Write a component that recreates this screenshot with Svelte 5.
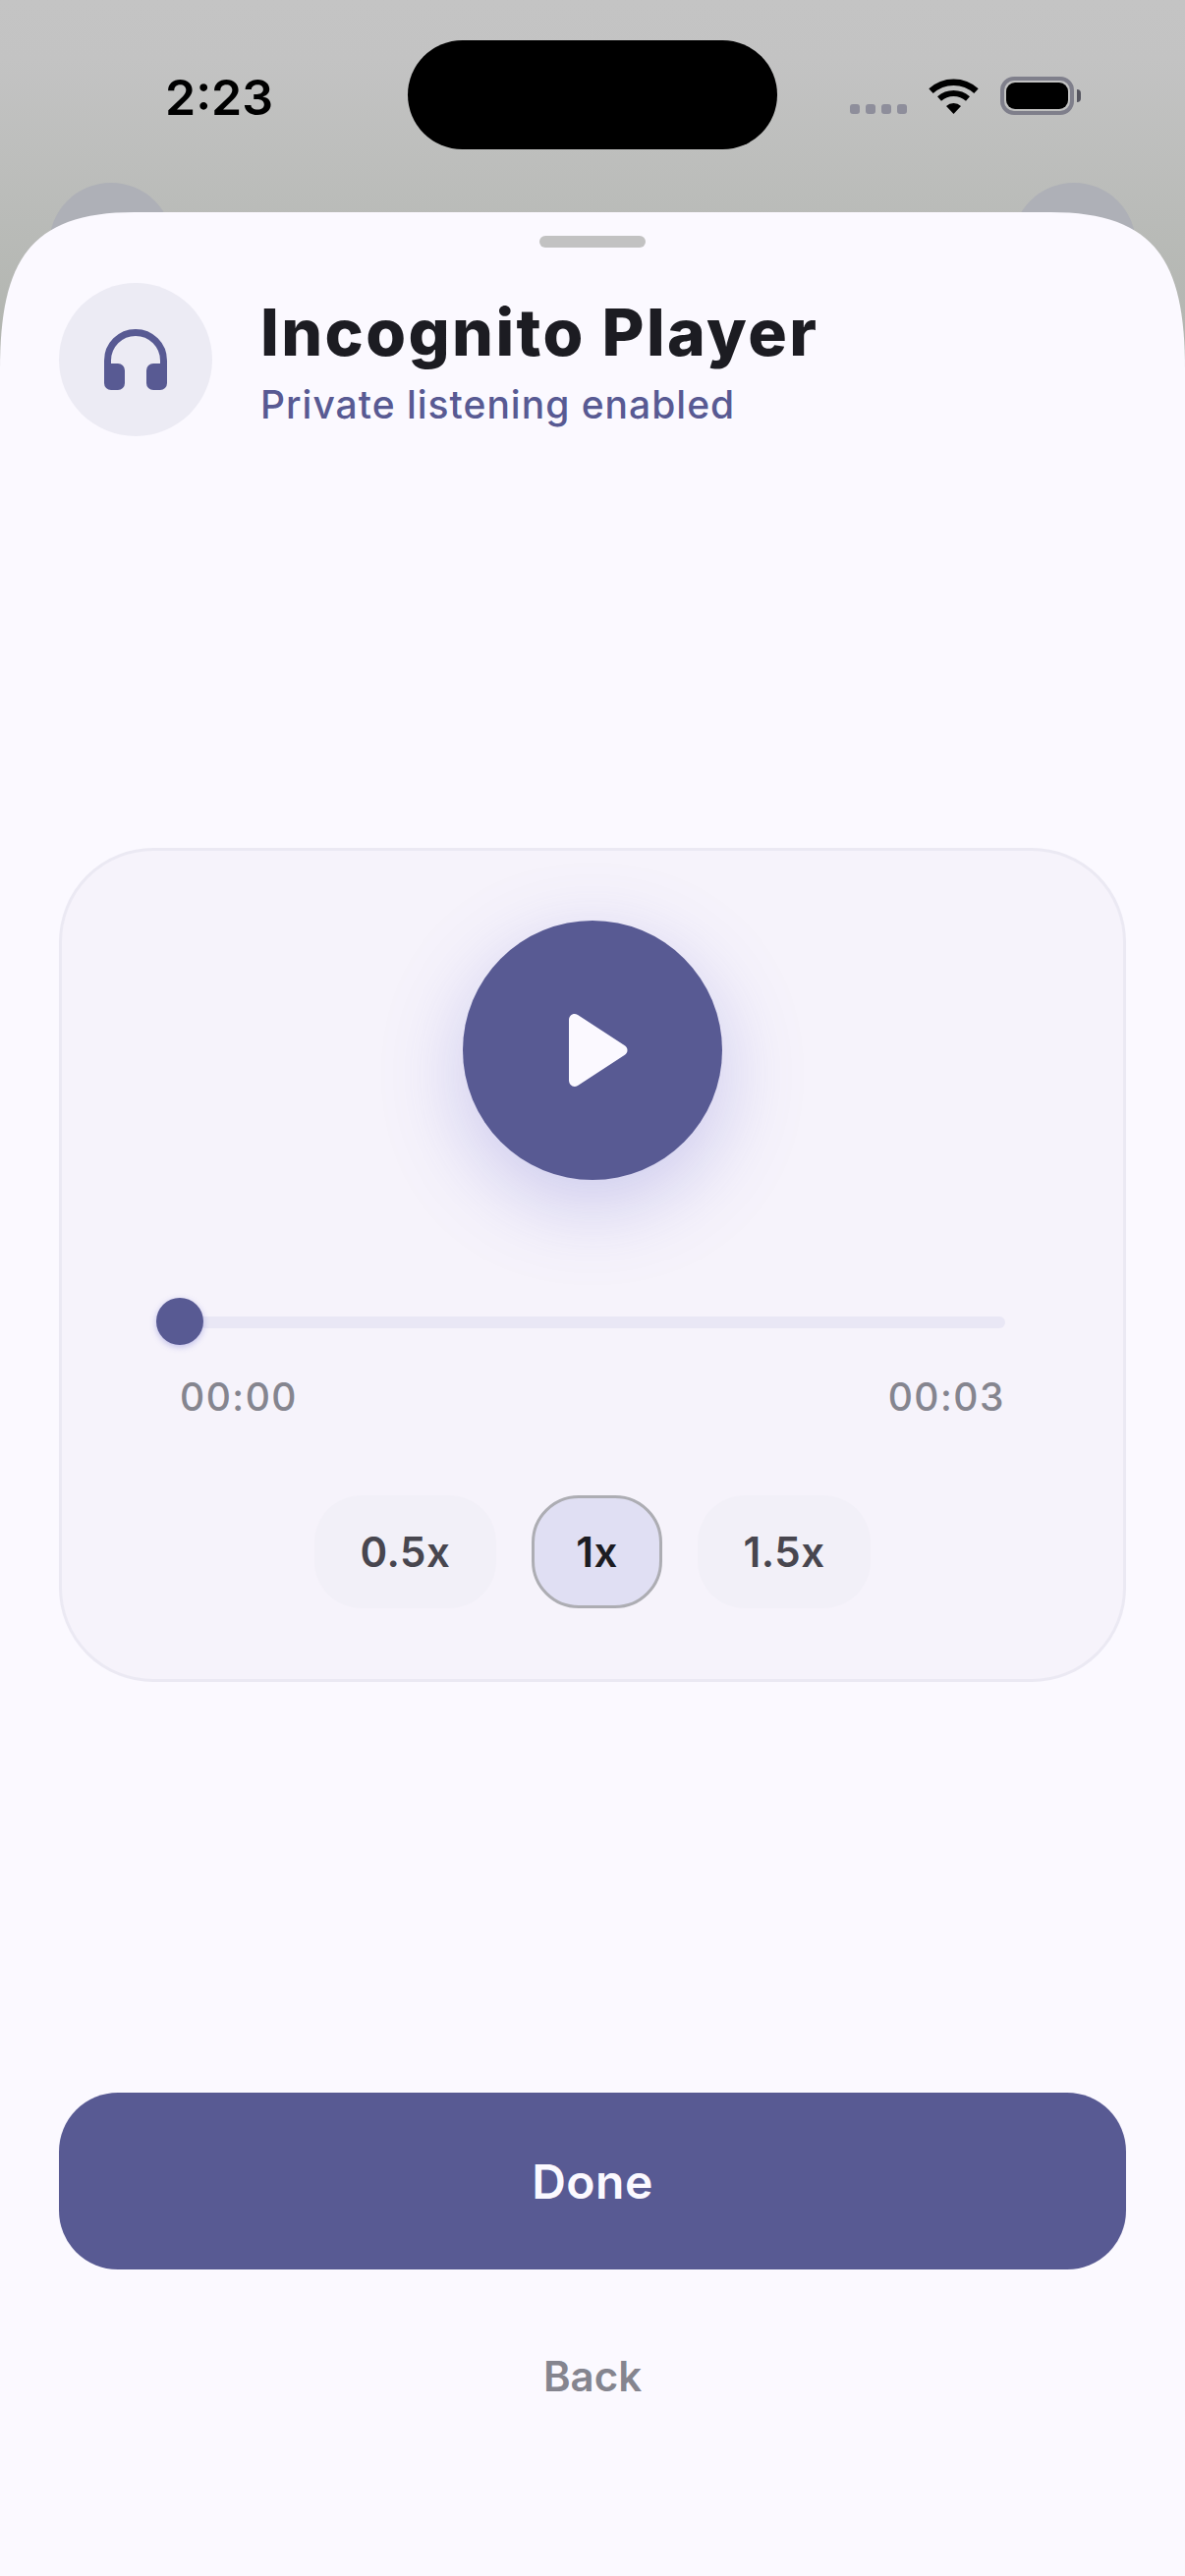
<script>
  const speeds = [
    { label: "0.5x", width: 185, active: false },
    { label: "1x", width: 133, active: true },
    { label: "1.5x", width: 176, active: false },
  ];
</script>

<div class="page">
  <span class="behind left"></span>
  <span class="behind right"></span>

  <header class="status">
    <span class="time">2:23</span>
    <span class="island"></span>
    <div class="status-icons">
      <div class="dots">
        <i></i><i></i><i></i><i></i>
      </div>
      <svg class="wifi" width="51" height="37" viewBox="0 0 51 37" aria-hidden="true">
        <path d="M2.5 13.6A34 34 0 0 1 48.5 13.6" fill="none" stroke="#000" stroke-width="6.5" />
        <path d="M11 21.4A22 22 0 0 1 40 21.4" fill="none" stroke="#000" stroke-width="6" />
        <path d="M25.5 37L18 29A11 11 0 0 1 33 29Z" fill="#000" />
      </svg>
      <div class="battery">
        <div class="battery-body"><span class="battery-fill"></span></div>
        <span class="battery-nub"></span>
      </div>
    </div>
  </header>

  <main class="sheet">
    <span class="handle"></span>

    <section class="head">
      <div class="avatar">
        <svg width="64" height="62" viewBox="0 0 64 62" aria-hidden="true">
          <path d="M3.5 42V32A28.5 28.5 0 0 1 60.5 32V42" fill="none" stroke="#585a93" stroke-width="7" />
          <rect x="0" y="35" width="21" height="27" rx="7" fill="#585a93" />
          <rect x="43" y="35" width="21" height="27" rx="7" fill="#585a93" />
        </svg>
      </div>
      <div class="head-text">
        <h1>Incognito Player</h1>
        <p>Private listening enabled</p>
      </div>
    </section>

    <section class="middle">
      <div class="card">
        <button class="play" aria-label="Play">
          <svg width="62" height="76" viewBox="0 0 62 76" aria-hidden="true">
            <path d="M1 7.5C1 2.5 5.5 -0.5 10 2L57.5 33C61.5 35.5 61.5 40.5 57.5 43L10 74C5.5 76.5 1 73.5 1 68.5Z" fill="#fbf9ff" />
          </svg>
        </button>

        <div class="slider">
          <div class="track"></div>
          <span class="thumb"></span>
        </div>
        <div class="times">
          <span>00:00</span>
          <span>00:03</span>
        </div>

        <div class="speeds">
          {#each speeds as speed}
            <button class="chip" class:active={speed.active} style="width: {speed.width}px">{speed.label}</button>
          {/each}
        </div>
      </div>
    </section>

    <footer class="actions">
      <button class="done">Done</button>
      <button class="back">Back</button>
    </footer>
  </main>
</div>

<style>
  :global(body) {
    margin: 0;
  }
  .page {
    position: relative;
    width: 1206px;
    height: 2622px;
    display: flex;
    flex-direction: column;
    overflow: hidden;
    font-family: Inter, "Noto Sans", sans-serif;
    background: linear-gradient(#c4c4c4 0, #c3c3c3 60px, #b3b6b1 330px);
  }
  .behind {
    position: absolute;
    top: 186px;
    width: 126px;
    height: 126px;
    border-radius: 50%;
    background: #aeb0b7;
  }
  .behind.left {
    left: 50px;
  }
  .behind.right {
    right: 50px;
  }

  .status {
    position: relative;
    height: 216px;
    flex: none;
    box-sizing: border-box;
    padding-top: 41px;
    display: grid;
    grid-template-columns: 415px 376px 1fr;
    align-items: start;
  }
  .time {
    padding: 28px 0 0 168px;
    font-size: 50px;
    line-height: 60px;
    font-weight: 600;
    color: #000;
  }
  .island {
    height: 111px;
    border-radius: 56px;
    background: #000;
  }
  .status-icons {
    display: flex;
    align-items: flex-start;
    padding: 37px 0 0 74px;
  }
  .dots {
    display: flex;
    gap: 6px;
    margin-top: 28px;
    width: 80px;
  }
  .dots i {
    width: 10px;
    height: 10px;
    border-radius: 3px;
    background: #8e8e9b;
  }
  .wifi {
    margin-top: 1px;
  }
  .battery {
    display: flex;
    align-items: center;
    margin-left: 22px;
  }
  .battery-body {
    box-sizing: border-box;
    width: 75px;
    height: 39px;
    padding: 2px;
    border: 4px solid #7f7f8b;
    border-radius: 14px;
    display: flex;
  }
  .battery-fill {
    flex: 1;
    border-radius: 9px;
    background: #000;
  }
  .battery-nub {
    width: 4px;
    height: 13px;
    margin-left: 3px;
    border-radius: 0 6px 6px 0;
    background: #55555f;
  }

  .sheet {
    position: relative;
    flex: 1;
    display: flex;
    flex-direction: column;
    background: #fbf9ff;
    clip-path: path("M0 160C0 50 30 0 137 0H1069C1176 0 1206 50 1206 160V2406H0Z");
  }
  .handle {
    flex: none;
    align-self: center;
    width: 108px;
    height: 12px;
    margin-top: 24px;
    border-radius: 6px;
    background: #c2c2c2;
  }
  .head {
    display: flex;
    align-items: center;
    gap: 49px;
    margin-top: 36px;
    padding: 0 60px;
  }
  .avatar {
    width: 156px;
    height: 156px;
    border-radius: 50%;
    background: #ecebf4;
    display: flex;
    align-items: center;
    justify-content: center;
  }
  .head-text {
    display: flex;
    flex-direction: column;
    gap: 12px;
    padding-top: 4px;
  }
  h1 {
    margin: 0;
    font-size: 66px;
    line-height: 76px;
    font-weight: 800;
    letter-spacing: 2.4px;
    color: #1c1c22;
  }
  .head-text p {
    margin: 0;
    font-size: 39px;
    line-height: 48px;
    font-weight: 500;
    letter-spacing: 1px;
    color: #585a93;
  }

  .middle {
    flex: 1;
    display: flex;
    align-items: center;
    padding: 0 60px;
  }
  .card {
    flex: 1;
    box-sizing: border-box;
    padding: 71px 120px 72px;
    border: 3px solid #ebe9f3;
    border-radius: 96px;
    background: #f6f3fb;
    display: flex;
    flex-direction: column;
  }
  button {
    font-family: inherit;
    border: none;
    padding: 0;
  }
  .play {
    align-self: center;
    width: 264px;
    height: 264px;
    border-radius: 50%;
    background: #585a93;
    box-shadow: 0 24px 84px rgba(88, 90, 200, 0.28);
    display: flex;
    align-items: center;
    justify-content: center;
  }
  .play svg {
    margin-left: 11px;
  }
  .slider {
    position: relative;
    height: 48px;
    margin-top: 120px;
    display: flex;
    align-items: center;
  }
  .track {
    flex: 1;
    height: 12px;
    margin-top: 2px;
    border-radius: 6px;
    background: #e9e7f5;
  }
  .thumb {
    position: absolute;
    left: -24px;
    top: 0;
    width: 48px;
    height: 48px;
    border-radius: 50%;
    background: #585a93;
    box-shadow: 0 2px 6px rgba(88, 90, 200, 0.35);
  }
  .times {
    display: flex;
    justify-content: space-between;
    margin-top: 29px;
    font-size: 39px;
    line-height: 48px;
    font-weight: 500;
    letter-spacing: 1.5px;
    color: #85858f;
  }
  .speeds {
    display: flex;
    justify-content: center;
    align-items: center;
    gap: 36px;
    margin-top: 76px;
  }
  .chip {
    box-sizing: border-box;
    height: 115px;
    border-radius: 48px;
    background: #f2f0f8;
    font-size: 42px;
    font-weight: 600;
    letter-spacing: 0.5px;
    color: #48464f;
  }
  .chip.active {
    border: 3px solid #adadb3;
    background: #e0dff3;
    color: #1c1c22;
  }

  .actions {
    display: flex;
    flex-direction: column;
    padding: 0 60px 144px;
  }
  .done {
    height: 180px;
    border-radius: 60px;
    background: #585a93;
    font-size: 48px;
    font-weight: 600;
    letter-spacing: 0.5px;
    color: #fbf9ff;
  }
  .back {
    height: 120px;
    margin-top: 48px;
    background: none;
    font-size: 42px;
    font-weight: 600;
    color: #85858f;
  }
</style>
